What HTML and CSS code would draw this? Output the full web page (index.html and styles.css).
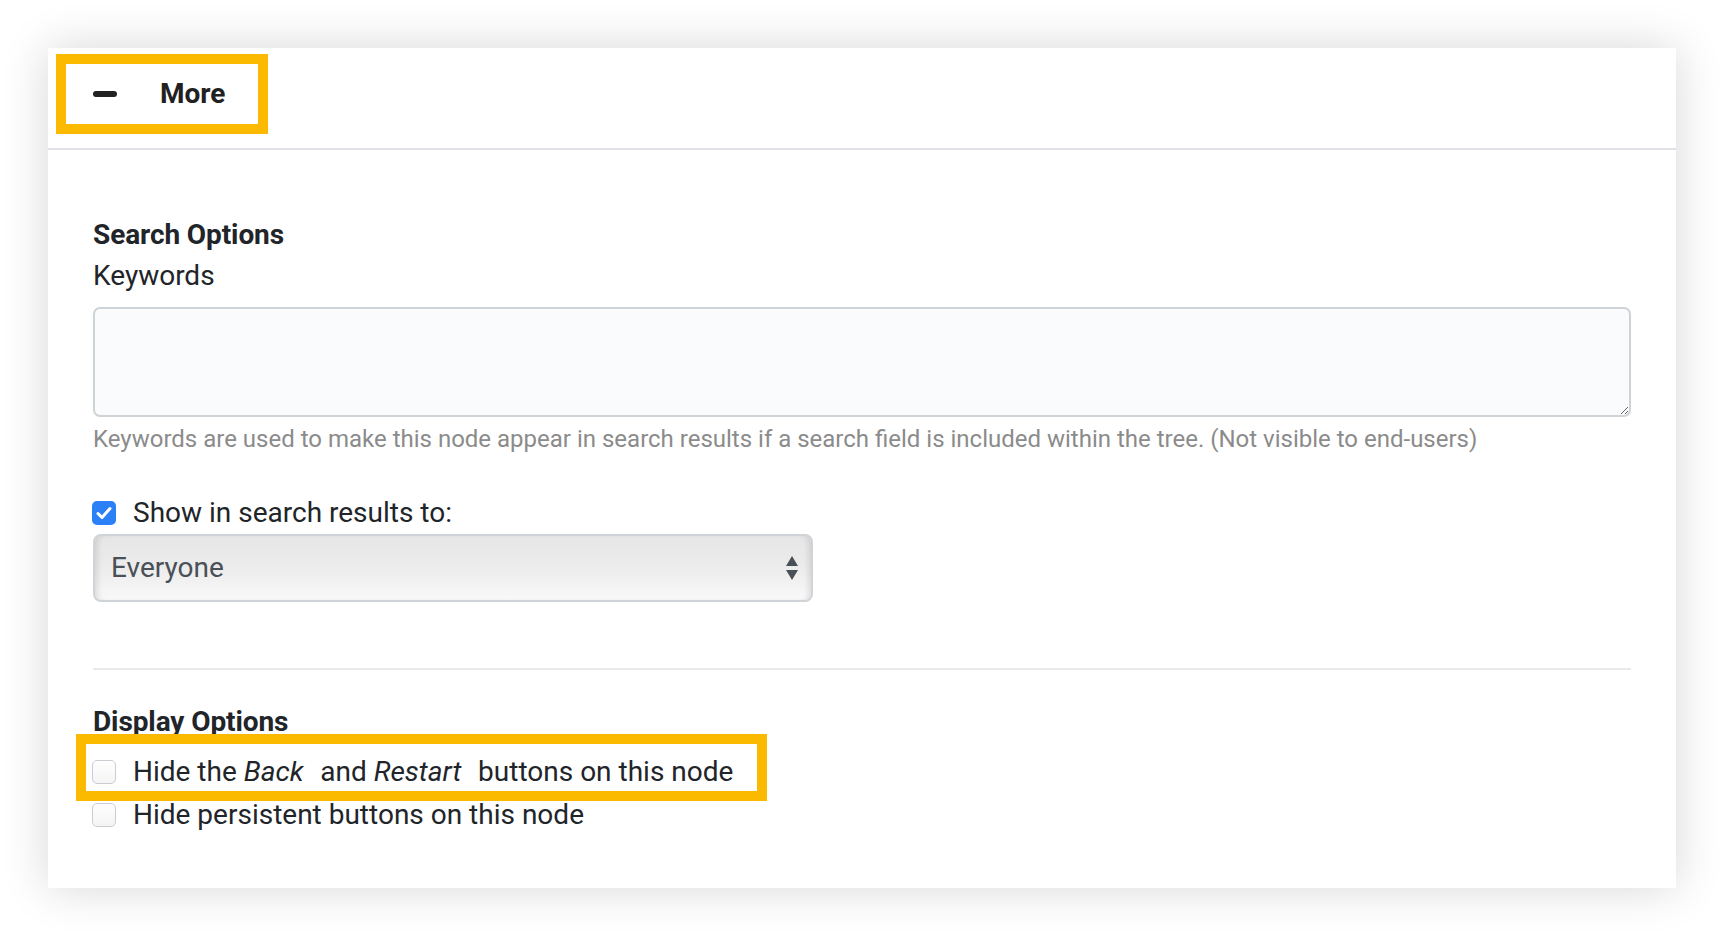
FILE: index.html
```html
<!DOCTYPE html>
<html>
<head>
<meta charset="utf-8">
<link rel="stylesheet" href="styles.css">
</head>
<body>
<div class="card">
  <div class="card-header">
    <div class="toggle">
      <span class="minus"></span>
      <span class="toggle-label">More</span>
    </div>
  </div>
  <div class="card-body">
    <h3 class="section-title">Search Options</h3>
    <label class="field-label">Keywords</label>
    <textarea class="keywords" readonly></textarea>
    <p class="help">Keywords are used to make this node appear in search results if a search field is included within the tree. (Not visible to end-users)</p>

    <div class="check-row first">
      <span class="checkbox checked">
        <svg viewBox="0 0 24 24" width="24" height="24"><path d="M6 12.5l4 4 8-9" fill="none" stroke="#fff" stroke-width="3" stroke-linecap="round" stroke-linejoin="round"/></svg>
      </span>
      <span class="check-text">Show in search results to:</span>
    </div>
    <div class="select">
      <span class="select-value">Everyone</span>
      <svg class="select-arrows" viewBox="0 0 12 24" width="12" height="24"><path d="M6 0L12 10H0z" fill="#495057"/><path d="M0 14h12L6 24z" fill="#495057"/></svg>
    </div>

    <hr class="divider">

    <h3 class="section-title display">Display Options</h3>
    <div class="check-row highlighted">
      <span class="highlight-box"></span>
      <span class="checkbox"></span>
      <span class="check-text">Hide the <em>Back </em> and <em>Restart </em> buttons on this node</span>
    </div>
    <div class="check-row second">
      <span class="checkbox"></span>
      <span class="check-text">Hide persistent buttons on this node</span>
    </div>
  </div>
</div>
</body>
</html>
```

FILE: styles.css
```css
html, body {
  margin: 0;
  padding: 0;
  background: #ffffff;
}
body {
  font-family: Roboto, "Liberation Sans", sans-serif;
  color: #212529;
  padding: 48px;
  width: 1628px;
}
.card {
  width: 1628px;
  height: 840px;
  background: #ffffff;
  box-shadow: 0 0 44px rgba(0, 0, 0, 0.16);
  box-sizing: border-box;
}
.card-header {
  height: 94px;
  border-bottom: 2px solid #dfe1e6;
  padding: 6px 0 0 8px;
  box-sizing: content-box;
}
.toggle {
  width: 192px;
  height: 60px;
  border: 10px solid #fbb900;
  display: flex;
  align-items: center;
  box-sizing: content-box;
}
.minus {
  width: 24px;
  height: 6px;
  border-radius: 3px;
  background: #222;
  margin-left: 27px;
}
.toggle-label {
  font-size: 28px;
  font-weight: 700;
  color: #212121;
  margin-left: 43px;
  line-height: 32px;
}
.card-body {
  padding: 69px 45px 0 45px;
}
.section-title {
  margin: 0;
  font-size: 28px;
  font-weight: 700;
  line-height: 32px;
  letter-spacing: -0.1px;
}
.field-label {
  display: block;
  font-size: 28px;
  line-height: 32px;
  margin-top: 9px;
}
.keywords {
  display: block;
  margin-top: 15px;
  width: 1538px;
  height: 110px;
  box-sizing: border-box;
  border: 2px solid #ced3d8;
  border-radius: 7px;
  background: #fafbfc;
  resize: vertical;
  font-family: inherit;
  outline: none;
}
.help {
  margin: 8px 0 0 0;
  font-size: 24px;
  line-height: 28px;
  color: #8b8b8b;
}
.check-row {
  display: flex;
  align-items: center;
  height: 32px;
  position: relative;
}
.check-row.first {
  margin-top: 44px;
}
.checkbox {
  width: 24px;
  height: 24px;
  box-sizing: border-box;
  border-radius: 5px;
  border: 1.5px solid #c9cdd2;
  background: linear-gradient(#ffffff, #f4f4f4);
  display: inline-flex;
  align-items: center;
  justify-content: center;
  flex: none;
  margin-left: -1px;
}
.checkbox.checked {
  border: none;
  background: #2b80f8;
}
.check-text {
  font-size: 28px;
  line-height: 32px;
  margin-left: 17px;
  color: #212529;
}
.check-text em {
  font-style: italic;
  white-space: pre;
  padding-right: 3px;
}
.select {
  margin-top: 5px;
  width: 720px;
  height: 68px;
  box-sizing: border-box;
  border: 2px solid #d0d4d8;
  border-radius: 8px;
  background: linear-gradient(#e6e6e6, #ececec 50%, #f9f9f9);
  box-shadow: inset 6px 0 6px -4px rgba(0, 0, 0, 0.12), inset -6px 0 6px -4px rgba(0, 0, 0, 0.12);
  display: flex;
  align-items: center;
  justify-content: space-between;
  padding: 0 13px 0 16px;
}
.select-value {
  font-size: 28px;
  color: #495057;
  line-height: 32px;
}
.select-arrows {
  display: block;
}
.divider {
  margin: 66px 0 0 0;
  border: none;
  border-top: 2px solid #e9eaec;
  height: 0;
}
.section-title.display {
  margin-top: 36px;
}
.check-row.highlighted {
  margin-top: 18px;
}
.check-row.second {
  margin-top: 11px;
}
.highlight-box {
  position: absolute;
  left: -17px;
  top: -22px;
  width: 691px;
  height: 67px;
  box-sizing: border-box;
  border: 10px solid #fbb900;
  pointer-events: none;
}
```
